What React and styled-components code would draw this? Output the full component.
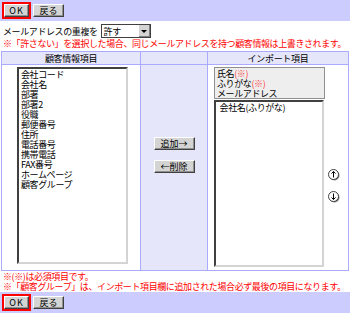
import React from 'react';
import styled, { createGlobalStyle } from 'styled-components';

const GlobalStyle = createGlobalStyle`
  body {
    margin: 0;
    font-family: "Noto Sans CJK JP", "DejaVu Sans", sans-serif;
    font-size: 9px;
    color: #000;
    background: #fff;
  }
`;

const Page = styled.div`
  width: 350px;
  height: 313px;
  display: flex;
  flex-direction: column;
  overflow: hidden;
`;

const Bar = styled.div`
  height: 21px;
  background: #ccccff;
  display: flex;
  align-items: center;
  gap: 2px;
  padding: 0 2px;
  flex-shrink: 0;
`;

const Focus = styled.span`
  border: 2px solid #ff0000;
  display: flex;
`;

const Button = styled.button`
  font-family: inherit;
  font-size: 9px;
  line-height: 11px;
  height: 13px;
  width: ${p => p.$w || 31}px;
  padding: 0;
  background: #d4d4d4;
  color: #000;
  border: 1px solid;
  border-color: #ffffff #404040 #404040 #ffffff;
  box-shadow: inset -1px -1px #909090;
  letter-spacing: ${p => p.$ls || 0}px;
`;

const Line = styled.div`
  display: flex;
  align-items: center;
  height: 16px;
  margin-top: 2px;
  padding-left: 3px;
  letter-spacing: -0.4px;
`;

const Select = styled.div`
  margin-left: 3px;
  width: 50px;
  height: 14px;
  border: 1px solid #404040;
  box-sizing: border-box;
  display: flex;
  align-items: center;
  justify-content: space-between;
  padding-left: 2px;
  background: #fff;
`;

const SelectArrow = styled.span`
  width: 11px;
  height: 12px;
  background: #d4d4d4;
  border-left: 1px solid #fff;
  box-shadow: inset -1px -1px #808080;
  display: flex;
  align-items: center;
  justify-content: center;
  &::after {
    content: '';
    border-left: 3px solid transparent;
    border-right: 3px solid transparent;
    border-top: 3px solid #000;
  }
`;

const Note = styled.div`
  color: #ff0000;
  padding-left: 3px;
  line-height: 10px;
  height: 10px;
  margin-top: ${p => p.$mt || 0}px;
  letter-spacing: -0.4px;
  white-space: nowrap;
`;

const Table = styled.div`
  margin: 2px 1px 0 1px;
  border: 1px solid #aaaaff;
  display: grid;
  grid-template-columns: 139px 67px 1fr;
  grid-template-rows: 13px 205px;
`;

const HeadCell = styled.div`
  background: #e6e6fa;
  border-bottom: 1px solid #aaaaff;
  border-right: ${p => (p.$last ? 'none' : '1px solid #aaaaff')};
  text-align: center;
  line-height: 13px;
  letter-spacing: -0.3px;
`;

const LeftCell = styled.div`
  border-right: 1px solid #aaaaff;
  padding: 2px 0 0 15px;
`;

const MiddleCell = styled.div`
  background: #e6e6fa;
  border-right: 1px solid #aaaaff;
  display: flex;
  flex-direction: column;
  align-items: center;
  justify-content: center;
  gap: 10px;
  padding-bottom: 26px;
`;

const RightCell = styled.div`
  display: flex;
  padding: 2px 0 0 6px;
  gap: 3px;
`;

const ListBox = styled.div`
  width: ${p => p.$w}px;
  height: ${p => p.$h}px;
  box-sizing: border-box;
  border: 2px solid;
  border-color: #404040 #d4d4d4 #d4d4d4 #404040;
  background: #fff;
  padding: 1px 2px;
  line-height: 10px;
  letter-spacing: -0.4px;
`;

const FixedList = styled.div`
  width: 111px;
  height: 32px;
  box-sizing: border-box;
  border: 1px solid #909090;
  background: #eeeeee;
  padding: 1px 2px;
  line-height: 10px;
  letter-spacing: -0.4px;
`;

const Required = styled.span`
  color: #ff4040;
`;

const RightStack = styled.div`
  display: flex;
  flex-direction: column;
  gap: 1px;
`;

const ArrowColumn = styled.div`
  display: flex;
  flex-direction: column;
  gap: 10px;
  padding-top: 102px;
`;

const Arrow = ({ down }) => (
  <svg width="12" height="12" viewBox="0 0 12 12">
    <circle cx="6.5" cy="6.5" r="5" fill="#808080" />
    <circle cx="5.5" cy="5.5" r="5" fill="#fff" stroke="#303030" strokeWidth="0.9" />
    <g stroke="#000" strokeWidth="1" fill="none" transform={down ? 'rotate(180 5.5 5.5)' : undefined}>
      <line x1="5.5" y1="2.5" x2="5.5" y2="8.5" />
      <polyline points="3.5,4.5 5.5,2.5 7.5,4.5" />
    </g>
  </svg>
);

const leftItems = [
  '会社コード', '会社名', '部署', '部署2', '役職', '郵便番号', '住所',
  '電話番号', '携帯電話', 'FAX番号', 'ホームページ', '顧客グループ',
];

const Actions = () => (
  <Bar>
    <Focus><Button $w={25} $ls={1}>OK</Button></Focus>
    <Button $w={31}>戻る</Button>
  </Bar>
);

export default function App() {
  return (
    <Page>
      <GlobalStyle />
      <Actions />
      <Line>
        メールアドレスの重複を
        <Select>許す<SelectArrow /></Select>
      </Line>
      <Note>※「許さない」を選択した場合、同じメールアドレスを持つ顧客情報は上書きされます。</Note>
      <Table>
        <HeadCell>顧客情報項目</HeadCell>
        <HeadCell />
        <HeadCell $last>インポート項目</HeadCell>
        <LeftCell>
          <ListBox $w={111} $h={197}>
            {leftItems.map(item => <div key={item}>{item}</div>)}
          </ListBox>
        </LeftCell>
        <MiddleCell>
          <Button $w={41}>追加→</Button>
          <Button $w={41}>←削除</Button>
        </MiddleCell>
        <RightCell>
          <RightStack>
            <FixedList>
              <div>氏名<Required>(※)</Required></div>
              <div>ふりがな<Required>(※)</Required></div>
              <div>メールアドレス</div>
            </FixedList>
            <ListBox $w={110} $h={167}>
              <div>&nbsp;会社名(ふりがな)</div>
            </ListBox>
          </RightStack>
          <ArrowColumn>
            <Arrow />
            <Arrow down />
          </ArrowColumn>
        </RightCell>
      </Table>
      <Note $mt={1}>※(※)は必須項目です。</Note>
      <Note>※「顧客グループ」は、インポート項目欄に追加された場合必ず最後の項目になります。</Note>
      <div style={{ flex: 1 }} />
      <Actions />
    </Page>
  );
}
